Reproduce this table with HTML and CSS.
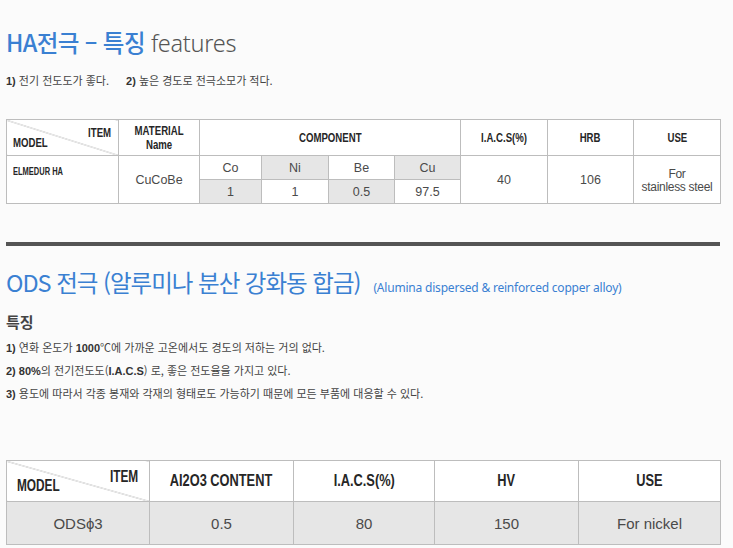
FILE: index.html
```html
<!DOCTYPE html>
<html lang="ko">
<head>
<meta charset="utf-8">
<link rel="stylesheet" href="styles.css">
</head>
<body>
<div class="page">
  <h1 class="title"><span class="blue">HA전극 – 특징</span> <span class="thin">features</span></h1>
  <p class="summary"><span><b>1)</b> 전기 전도도가 좋다.</span><span><b>2)</b> 높은 경도로 전극소모가 적다.</span></p>

  <table class="spec t1">
    <colgroup>
      <col style="width:112px"><col style="width:81px"><col style="width:62px"><col style="width:67px"><col style="width:66px"><col style="width:66px"><col style="width:87px"><col style="width:86px"><col style="width:87px">
    </colgroup>
    <tr class="head">
      <th class="diag"><span class="item">ITEM</span><span class="model">MODEL</span></th>
      <th><span class="cx">MATERIAL<br>Name</span></th>
      <th colspan="4"><span class="cx">COMPONENT</span></th>
      <th><span class="cx">I.A.C.S(%)</span></th>
      <th><span class="cx">HRB</span></th>
      <th><span class="cx">USE</span></th>
    </tr>
    <tr class="r">
      <td rowspan="2" class="mname"><span class="cxl">ELMEDUR HA</span></td>
      <td rowspan="2">CuCoBe</td>
      <td>Co</td>
      <td class="g">Ni</td>
      <td>Be</td>
      <td class="g">Cu</td>
      <td rowspan="2">40</td>
      <td rowspan="2">106</td>
      <td rowspan="2" class="use">For<br>stainless steel</td>
    </tr>
    <tr class="r">
      <td class="g">1</td>
      <td>1</td>
      <td class="g">0.5</td>
      <td>97.5</td>
    </tr>
  </table>

  <hr class="divider">

  <h2 class="title2"><span class="blue">ODS 전극 (알루미나 분산 강화동 합금)</span><span class="sub">(Alumina dispersed &amp; reinforced copper alloy)</span></h2>
  <h3 class="feat">특징</h3>
  <ul class="list">
    <li><b>1)</b> 연화 온도가 <b>1000</b>℃에 가까운 고온에서도 경도의 저하는 거의 없다.</li>
    <li><b>2) 80%</b>의 전기전도도(<b>I.A.C.S</b>) 로, 좋은 전도율을 가지고 있다.</li>
    <li><b>3)</b> 용도에 따라서 각종 봉재와 각재의 형태로도 가능하기 때문에 모든 부품에 대응할 수 있다.</li>
  </ul>

  <table class="spec t2">
    <colgroup>
      <col style="width:143px"><col style="width:144px"><col style="width:141px"><col style="width:144px"><col style="width:142px">
    </colgroup>
    <tr class="head">
      <th class="diag"><span class="item">ITEM</span><span class="model">MODEL</span></th>
      <th><span class="cx">AI2O3 CONTENT</span></th>
      <th><span class="cx">I.A.C.S(%)</span></th>
      <th><span class="cx">HV</span></th>
      <th><span class="cx">USE</span></th>
    </tr>
    <tr class="r g">
      <td>ODS&#981;3</td>
      <td>0.5</td>
      <td>80</td>
      <td>150</td>
      <td>For nickel</td>
    </tr>
  </table>
</div>
</body>
</html>
```

FILE: styles.css
```css
html, body {
  margin: 0;
  padding: 0;
  background: #fbfbfb;
}
body {
  font-family: "Liberation Sans", "Noto Sans CJK KR", sans-serif;
  color: #444;
}
.page {
  padding: 0 13px 0 6px;
}
.blue { color: #3a80d2; }
.title {
  margin: 0;
  padding-top: 27px;
  font-size: 23.5px;
  font-weight: 500;
  line-height: 30px;
  letter-spacing: -0.6px;
  font-family: "Noto Sans CJK KR", sans-serif;
}
.title .thin {
  color: #555;
  font-family: "Noto Sans", "Liberation Sans", sans-serif;
  font-weight: 300;
  letter-spacing: -0.3px;
}
.summary {
  margin: 14px 0 0;
  font-size: 11px;
  line-height: 16px;
  color: #444;
  font-family: "Noto Sans CJK KR", sans-serif;
  display: flex;
  gap: 17px;
}
.summary b, .list b { font-family: "Liberation Sans", sans-serif; color: #333; }
.spec {
  border-collapse: collapse;
  table-layout: fixed;
  width: 714px;
  background: #fff;
}
.spec th, .spec td {
  border: 1px solid #bdbdbd;
  text-align: center;
  padding: 0;
}
.spec th {
  font-family: "Liberation Sans", sans-serif;
  font-weight: bold;
  color: #262626;
}
.cx {
  display: inline-block;
  white-space: nowrap;
  transform: scaleX(0.74);
}
.t1 { margin-top: 30px; }
.t1 .head th { height: 35px; font-size: 13px; line-height: 14px; }
.t1 .r td { height: 23px; font-size: 12.5px; color: #4a4a4a; }
.g, .spec .g td, .spec td.g { background: #e6e6e6; }
.diag {
  position: relative;
  background: linear-gradient(to top right, transparent calc(50% - 0.6px), #b0b0b0 50%, transparent calc(50% + 0.6px));
}
.diag .item, .diag .model {
  position: absolute;
  white-space: nowrap;
}
.diag .item {
  top: 6px;
  right: 7px;
  transform: scaleX(0.74);
  transform-origin: right center;
}
.diag .model {
  left: 6px;
  bottom: 5px;
  transform: scaleX(0.74);
  transform-origin: left center;
}
.t1 td.mname {
  font-family: "Liberation Sans", sans-serif;
  font-weight: bold;
  font-size: 10px;
  color: #262626;
  text-align: left;
  vertical-align: top;
  padding: 10px 0 0 6px;
}
.cxl {
  display: inline-block;
  white-space: nowrap;
  transform: scaleX(0.75);
  transform-origin: left center;
}
.t1 td.use { font-size: 12px; letter-spacing: -0.3px; line-height: 13px; padding-top: 2px; }
.divider {
  margin: 38px 0 0;
  border: 0;
  height: 4px;
  background: #555;
  width: 714px;
}
.title2 {
  margin: 21px 0 0;
  font-family: "Noto Sans CJK KR", sans-serif;
  font-size: 23.5px;
  font-weight: 400;
  line-height: 30px;
  letter-spacing: -1px;
  display: flex;
  align-items: baseline;
  gap: 13px;
}
.title2 .sub {
  font-size: 12px;
  color: #3a80d2;
  letter-spacing: -0.2px;
  font-family: "Noto Sans", "Liberation Sans", sans-serif;
}
.feat {
  margin: 9px 0 0;
  font-size: 15px;
  line-height: 20px;
  font-family: "Noto Sans CJK KR", sans-serif;
  font-weight: bold;
  color: #444;
}
.list {
  list-style: none;
  margin: 7px 0 0;
  padding: 0;
  font-family: "Noto Sans CJK KR", sans-serif;
  font-size: 11px;
  color: #444;
}
.list li { line-height: 16px; margin-bottom: 6px; }
.t2 { margin-top: 58px; }
.t2 .head th { height: 40px; font-size: 16px; }
.t2 .cx { transform: scaleX(0.8); }
.t2 .r td { height: 42px; font-size: 15px; color: #4a4a4a; }
.t2 .diag .item { top: 7px; right: 11px; }
.t2 .diag .model { bottom: 6px; left: 10px; }
```
